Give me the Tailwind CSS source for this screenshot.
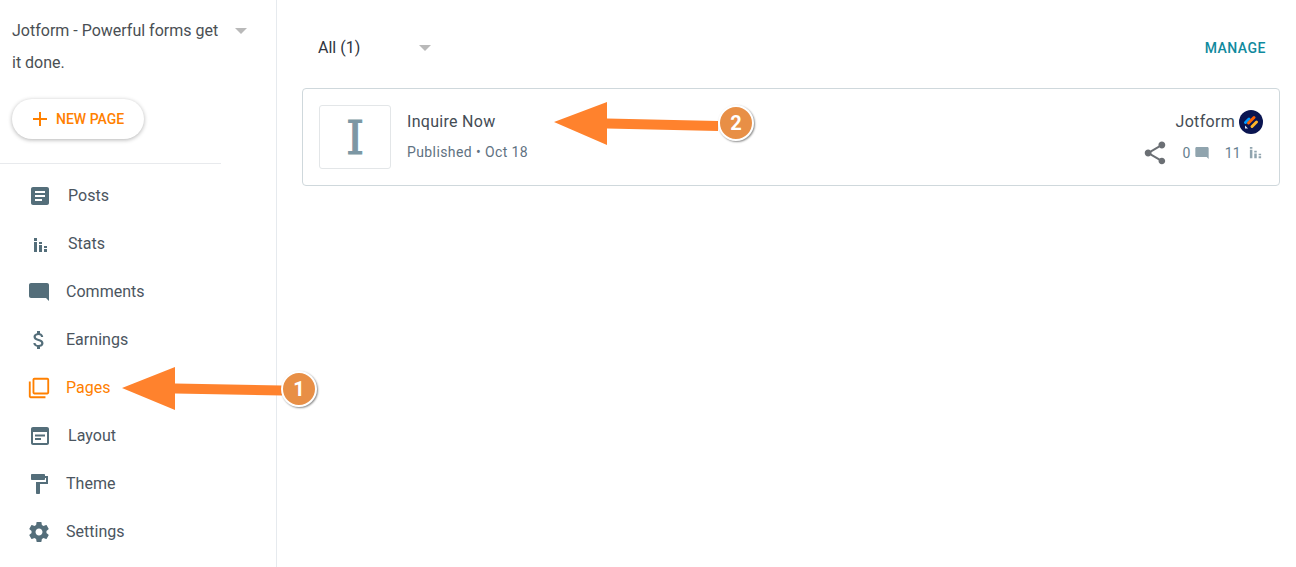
<!DOCTYPE html>
<html lang="en">
<head>
  <meta charset="UTF-8">
  <title>Pages</title>
  <script src="https://cdn.jsdelivr.net/npm/@tailwindcss/browser@4"></script>
</head>
<body class="bg-white overflow-hidden font-['Roboto',sans-serif]">
  <div class="relative flex h-[567px] w-[1296px]">
    <!-- sidebar -->
    <aside class="w-[277px] shrink-0 border-r border-[#e6eaee]">
      <div class="flex items-start pl-3 pt-[15px] w-[260px]">
        <p class="w-[216px] text-[16px] leading-[32px] text-[#4a4f54]">Jotform - Powerful forms get it done.</p>
        <span class="ml-[7px] mt-[13px] w-0 h-0 border-x-[6px] border-x-transparent border-t-[6px] border-t-[#b9b9b9]"></span>
      </div>
      <button class="ml-3 mt-[20px] flex items-center h-10 w-[132px] rounded-full bg-white pl-5 shadow-[0_1px_4px_rgba(0,0,0,0.3)] text-[14px] font-medium text-[#ff8000]">
        <svg class="w-4 h-4 mr-2" viewBox="0 0 16 16" fill="currentColor"><path d="M7 1h2v6h6v2H9v6H7V9H1V7h6z"/></svg>
        NEW PAGE
      </button>
      <div class="mt-6 h-px w-[221px] bg-[#e8eaed]"></div>
      <nav class="mt-2 text-[16px] tracking-[0.03px] text-[#4b5560]">
        <a class="flex items-center h-12 pl-7 gap-4">
          <svg class="w-6 h-6 text-[#546e7a]" viewBox="0 0 24 24" fill="currentColor"><path d="M19 3H5c-1.100 0-2 .9-2 2v14c0 1.100.9 2 2 2h14c1.100 0 2-.9 2-2V5c0-1.100-.9-2-2-2zm-5 14H7v-2h7v2zm3-4H7v-2h10v2zm0-4H7V7h10v2z"/></svg>
          Posts
        </a>
        <a class="flex items-center h-12 pl-7 gap-4">
          <svg class="w-6 h-6 text-[#546e7a]" viewBox="0 0 24 24" fill="currentColor"><path d="M6 6h3v3H6zM6 10h3v10H6zM11 10h3v2h-3zM11 13h3v7h-3zM16 14h3v2h-3zM16 17h3v3h-3z"/></svg>
          Stats
        </a>
        <a class="flex items-center h-12 pl-[27px] gap-[15px]">
          <svg class="w-6 h-6 text-[#546e7a]" viewBox="0 0 24 24" fill="currentColor"><path d="M22 5c0-1.100-.9-2-2-2H4c-1.100 0-2 .9-2 2v11c0 1.100.9 2 2 2h15l3 3z"/></svg>
          Comments
        </a>
        <a class="flex items-center h-12 pl-[27px] gap-[15px]">
          <svg class="w-6 h-6 text-[#546e7a]" viewBox="0 0 24 24" fill="currentColor"><path d="M11.800 10.900c-2.270-.59-3-1.200-3-2.150 0-1.090 1.010-1.850 2.700-1.850 1.780 0 2.440.85 2.500 2.100h2.210c-.07-1.720-1.120-3.300-3.210-3.810V3h-3v2.160c-1.940.42-3.500 1.680-3.500 3.610 0 2.310 1.910 3.460 4.700 4.130 2.500.6 3 1.480 3 2.410 0 .69-.49 1.790-2.700 1.790-2.060 0-2.870-.92-2.980-2.100h-2.200c.12 2.190 1.760 3.420 3.680 3.830V21h3v-2.150c1.950-.37 3.500-1.500 3.500-3.550 0-2.840-2.430-3.810-4.700-4.400z"/></svg>
          Earnings
        </a>
        <a class="flex items-center h-12 pl-[27px] gap-[15px] text-[#ff8000]">
          <svg class="w-6 h-6" viewBox="-1 -1 26 26" fill="currentColor"><path d="M3 5H1v16c0 1.100.9 2 2 2h16v-2H3V5zm18-4H7c-1.100 0-2 .9-2 2v14c0 1.100.9 2 2 2h14c1.100 0 2-.9 2-2V3c0-1.100-.9-2-2-2zm0 16H7V3h14v14z"/></svg>
          Pages
        </a>
        <a class="flex items-center h-12 pl-7 gap-4">
          <svg class="w-6 h-6 text-[#546e7a]" viewBox="0 0 24 24" fill="currentColor"><path d="M19 3H5c-1.110 0-2 .9-2 2v14c0 1.100.89 2 2 2h14c1.100 0 2-.9 2-2V5c0-1.100-.89-2-2-2zm0 16H5V8h14v11zM7 10.500h10v2H7zm0 3.500h6v2H7z"/></svg>
          Layout
        </a>
        <a class="flex items-center h-12 pl-[27px] gap-[15px]">
          <svg class="w-6 h-6 text-[#546e7a]" viewBox="0 0 24 24" fill="currentColor"><path d="M18 4V3c0-.55-.45-1-1-1H5c-.55 0-1 .45-1 1v4c0 .55.45 1 1 1h12c.55 0 1-.45 1-1V6h1v4H9v11c0 .55.45 1 1 1h2c.55 0 1-.45 1-1v-9h8V4h-3z"/></svg>
          Theme
        </a>
        <a class="flex items-center h-12 pl-[27px] gap-[15px]">
          <svg class="w-6 h-6 text-[#546e7a]" viewBox="0 0 24 24" fill="currentColor"><path d="M19.430 12.980c.04-.32.07-.64.07-.98s-.03-.66-.07-.98l2.110-1.650c.19-.15.24-.42.12-.64l-2-3.460c-.12-.22-.39-.3-.61-.22l-2.490 1c-.52-.4-1.080-.73-1.690-.98l-.38-2.650C14.460 2.180 14.250 2 14 2h-4c-.25 0-.46.18-.49.42l-.38 2.650c-.61.25-1.170.59-1.690.98l-2.490-1c-.23-.09-.49 0-.61.22l-2 3.460c-.13.22-.07.49.12.64l2.110 1.650c-.04.32-.07.65-.07.98s.03.66.07.98l-2.110 1.650c-.19.15-.24.42-.12.64l2 3.460c.12.22.39.3.61.22l2.490-1c.52.4 1.080.73 1.690.98l.38 2.650c.03.24.24.42.49.42h4c.25 0 .46-.18.49-.42l.38-2.650c.61-.25 1.170-.59 1.690-.98l2.490 1c.23.09.49 0 .61-.22l2-3.460c.12-.22.07-.49-.12-.64l-2.110-1.650zM12 15.500c-1.930 0-3.500-1.570-3.500-3.500s1.570-3.500 3.500-3.500 3.500 1.570 3.500 3.500-1.570 3.500-3.500 3.500z"/></svg>
          Settings
        </a>
      </nav>
    </aside>

    <!-- main -->
    <main class="flex-1 pl-[25px] pr-4">
      <div class="flex items-center justify-between h-[88px] pt-2">
        <div class="flex items-center pl-4">
          <span class="w-[101px] text-[16px] text-[#2f3440]">All (1)</span>
          <span class="w-0 h-0 border-x-[6px] border-x-transparent border-t-[6px] border-t-[#b9b9b9]"></span>
        </div>
        <a class="mr-[14px] text-[14px] font-medium tracking-[0.5px] text-[#108a9e]">MANAGE</a>
      </div>
      <div class="flex items-center h-[98px] border border-[#cfd8dc] rounded-[4px] pl-4 pr-4">
        <div class="flex items-center justify-center w-[72px] h-16 pt-[2px] border border-[#e3e6e8] rounded-[3px] font-['DejaVu_Serif',serif] text-[46px] leading-none text-[#7c97a4] [-webkit-text-stroke:1px_#7c97a4]">I</div>
        <div class="ml-4">
          <p class="text-[16px] leading-[20px] tracking-[0.3px] text-[#444c55]">Inquire Now</p>
          <p class="mt-[10px] text-[14px] leading-[20px] tracking-[0.4px] text-[#5f7282]">Published • Oct 18</p>
        </div>
        <div class="ml-auto flex flex-col items-end">
          <div class="flex items-center gap-1">
            <span class="text-[16px] leading-6 tracking-[0.3px] text-[#444c55]">Jotform</span>
            <svg class="w-6 h-6" viewBox="0 0 24 24">
              <circle cx="12" cy="12" r="12" fill="#0a1551"/>
              <path d="M6.500 12.500l3.500-3.500" stroke="#0099ff" stroke-width="3" stroke-linecap="round"/>
              <path d="M9.500 13l5.500-5.500" stroke="#ff6100" stroke-width="3" stroke-linecap="round"/>
              <path d="M13 16.500l4.500-4.500" stroke="#ffb629" stroke-width="3" stroke-linecap="round"/>
              <path d="M6 15.500v3h3z" fill="#dfe6f5"/>
            </svg>
          </div>
          <div class="flex items-center mt-[7px] text-[14px] leading-5 tracking-[0.3px] text-[#66808e]">
            <svg class="w-6 h-6 mr-[15px] text-[#6b6f74]" viewBox="1.500 1.500 21 21" fill="currentColor"><path d="M18 16.080c-.76 0-1.440.3-1.960.77L8.910 12.700c.05-.23.09-.46.09-.7s-.04-.47-.09-.7l7.050-4.110c.54.5 1.250.81 2.040.81 1.660 0 3-1.340 3-3s-1.340-3-3-3-3 1.340-3 3c0 .24.04.47.09.7L8.040 9.810C7.500 9.310 6.790 9 6 9c-1.660 0-3 1.340-3 3s1.340 3 3 3c.79 0 1.500-.31 2.040-.81l7.120 4.160c-.05.21-.08.43-.08.65 0 1.610 1.310 2.920 2.920 2.920 1.610 0 2.920-1.310 2.920-2.920s-1.310-2.920-2.920-2.920z"/></svg>
            <span>0</span>
            <svg class="w-4 h-4 ml-[3px] text-[#90a4ae]" viewBox="0 0 24 24" fill="currentColor"><path d="M22 5c0-1.100-.9-2-2-2H4c-1.100 0-2 .9-2 2v11c0 1.100.9 2 2 2h15l3 3z"/></svg>
            <span class="ml-[15px]">11</span>
            <svg class="w-[15px] h-[15px] ml-[7px] text-[#90a4ae]" viewBox="0 0 24 24" fill="currentColor"><path d="M3 3h4v3H3zM3 7.500h4V21H3zM10 9h4v3h-4zM10 13.500h4V21h-4zM17 14h4v2.500h-4zM17 18h4v3h-4z"/></svg>
          </div>
        </div>
      </div>
    </main>

    <!-- annotation arrows -->
    <svg class="absolute left-0 top-0 pointer-events-none" width="1296" height="567" viewBox="0 0 1296 567">
      <path d="M122 388L175 367V383.500L282 385.500V395.500L175 393.500V410z" fill="#ff822d"/>
      <path d="M554 122L607 102V118.500L718 121V131L607 128.500V145z" fill="#ff822d"/>
    </svg>
    <div class="absolute left-[281px] top-[371px] flex items-center justify-center w-9 h-9 rounded-full bg-[#e88f46] border-[2px] border-white shadow-[1px_1px_2px_rgba(0,0,0,0.45)] text-[20px] font-bold text-white">1</div>
    <div class="absolute left-[718px] top-[105px] flex items-center justify-center w-9 h-9 rounded-full bg-[#e88f46] border-[2px] border-white shadow-[1px_1px_2px_rgba(0,0,0,0.45)] text-[20px] font-bold text-white">2</div>
  </div>
</body>
</html>
